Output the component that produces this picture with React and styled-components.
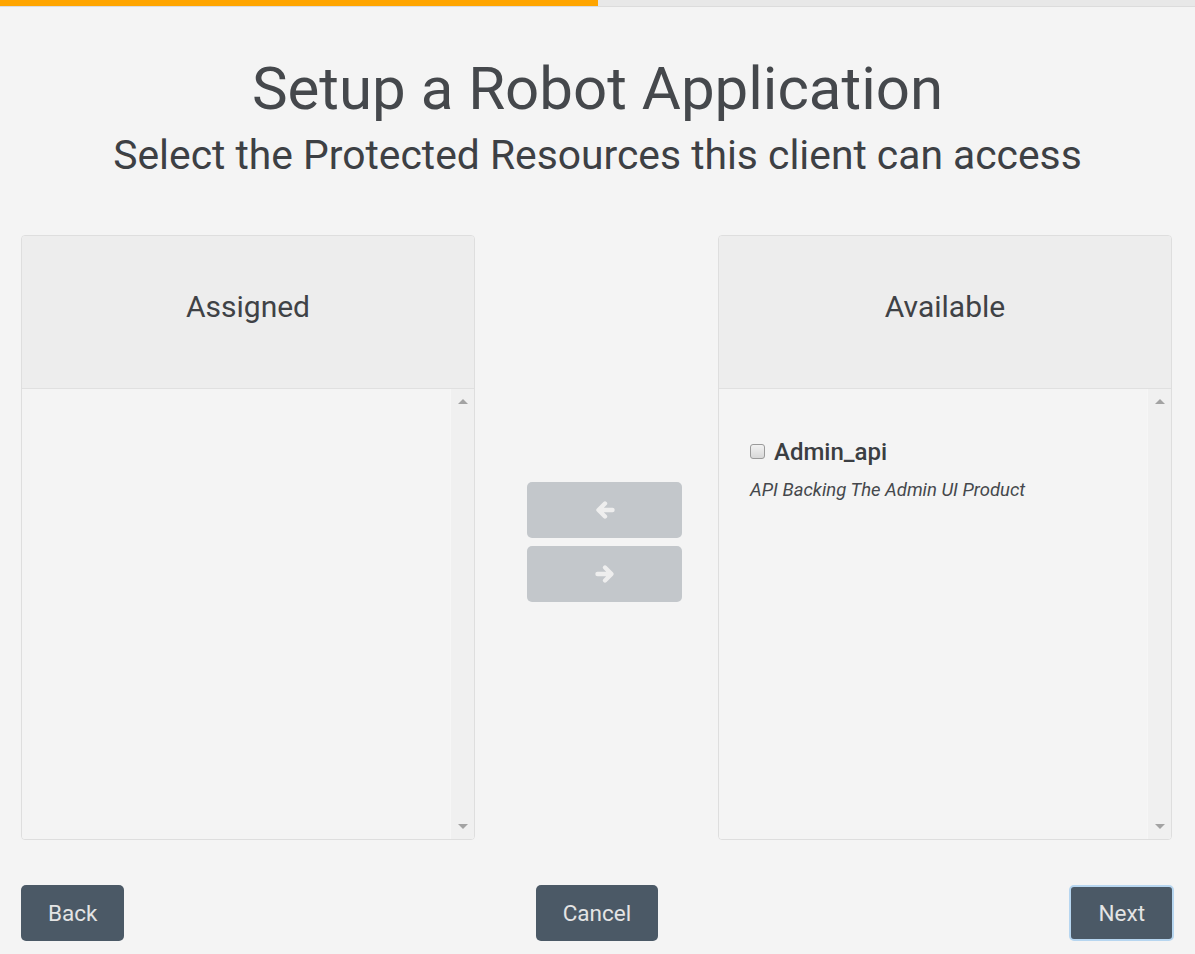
import React from 'react'
import styled, { createGlobalStyle } from 'styled-components'

const GlobalStyle = createGlobalStyle`
  html, body {
    margin: 0;
    padding: 0;
    background: #f4f4f4;
    font-family: Roboto, 'Liberation Sans', sans-serif;
  }
`

const Page = styled.div`
  width: 1195px;
  min-height: 954px;
  background: #f4f4f4;
  display: flex;
  flex-direction: column;
`

const Progress = styled.div`
  height: 6px;
  background: #e8e8e8;
  border-bottom: 1px solid #dcdcdc;
  display: flex;
`

const ProgressFill = styled.div`
  background: #ffa500;
  height: 100%;
`

const Heading = styled.header`
  display: flex;
  flex-direction: column;
  align-items: center;
  color: #45484c;
  padding-top: 48px;
`

const Title = styled.h1`
  margin: 0;
  font-size: 60px;
  font-weight: 400;
  line-height: 68px;
`

const Subtitle = styled.h2`
  margin: 8px 0 0;
  font-size: 40.8px;
  font-weight: 400;
  line-height: 48px;
  color: #3d4044;
`

const Picker = styled.section`
  display: grid;
  grid-template-columns: 454px 1fr 454px;
  padding: 0 23px 0 21px;
  margin-top: 56px;
`

const Panel = styled.div`
  height: 605px;
  border: 1px solid #dedede;
  border-radius: 4px;
  display: flex;
  flex-direction: column;
  overflow: hidden;
  box-sizing: border-box;
`

const PanelHead = styled.div`
  height: 153px;
  flex: none;
  background: #ededed;
  border-bottom: 1px solid #e0e0e0;
  display: flex;
  align-items: center;
  justify-content: center;
  padding-bottom: 12px;
  box-sizing: border-box;
  font-size: 30px;
  color: #3f4246;
`

const PanelBody = styled.div`
  flex: 1;
  display: flex;
  background: #f4f4f4;
`

const List = styled.div`
  flex: 1;
  padding: 49px 0 0 31px;
`

const Scrollbar = styled.div`
  width: 23px;
  flex: none;
  background: #f0f0f0;
  border-left: 1px solid #f6f6f6;
  display: flex;
  flex-direction: column;
  justify-content: space-between;
  align-items: center;
  padding: 10px 0 10px;
`

const Tri = styled.span`
  width: 0;
  height: 0;
  border-left: 5px solid transparent;
  border-right: 5px solid transparent;
  ${(p) =>
    p.$down
      ? 'border-top: 5px solid #a3a3a3;'
      : 'border-bottom: 5px solid #a3a3a3;'}
`

const Item = styled.label`
  display: flex;
  align-items: center;
  gap: 9px;
  font-size: 24px;
  font-weight: 500;
  color: #3b3e42;
`

const Box = styled.span`
  width: 13px;
  height: 13px;
  border: 1px solid #9a9a9a;
  border-radius: 3px;
  background: linear-gradient(#f2f2f2, #d8d8d8);
  display: inline-block;
  margin-top: -2px;
`

const Desc = styled.div`
  margin-top: 13px;
  font-size: 18.5px;
  font-style: italic;
  color: #45484c;
`

const Middle = styled.div`
  display: flex;
  flex-direction: column;
  align-items: center;
  padding: 247px 0 0 16px;
  gap: 8px;
`

const MoveButton = styled.button`
  width: 155px;
  height: 56px;
  border: none;
  border-radius: 5px;
  background: #c3c7cb;
  display: flex;
  align-items: center;
  justify-content: center;
  padding: 0;
`

const Footer = styled.footer`
  display: flex;
  justify-content: space-between;
  align-items: center;
  padding: 45px 21px 0 21px;
`

const ActionButton = styled.button`
  height: 56px;
  padding: 0 27px;
  border-radius: 5px;
  border: ${(p) => (p.$focus ? '2px solid #b7d6f0' : 'none')};
  background: #4b5966;
  color: #e4e4e4;
  font-family: Roboto, 'Liberation Sans', sans-serif;
  font-size: 22.5px;
  box-sizing: border-box;
`

const Arrow = ({ dir }) => (
  <svg width="22" height="20" viewBox="0 0 22 20">
    {dir === 'left' ? (
      <path
        d="M18.5 10H5M11 3.5L4.5 10l6.5 6.5"
        fill="none"
        stroke="#eeeeee"
        strokeWidth="4.4"
        strokeLinecap="round"
        strokeLinejoin="round"
      />
    ) : (
      <path
        d="M3.5 10H17M11 3.5l6.5 6.5-6.5 6.5"
        fill="none"
        stroke="#eeeeee"
        strokeWidth="4.4"
        strokeLinecap="round"
        strokeLinejoin="round"
      />
    )}
  </svg>
)

const ResourcePanel = ({ title, children }) => (
  <Panel>
    <PanelHead>{title}</PanelHead>
    <PanelBody>
      <List>{children}</List>
      <Scrollbar>
        <Tri />
        <Tri $down />
      </Scrollbar>
    </PanelBody>
  </Panel>
)

export default function App() {
  return (
    <Page>
      <GlobalStyle />
      <Progress>
        <ProgressFill style={{ width: '50%' }} />
      </Progress>
      <Heading>
        <Title>Setup a Robot Application</Title>
        <Subtitle>Select the Protected Resources this client can access</Subtitle>
      </Heading>
      <Picker>
        <ResourcePanel title="Assigned" />
        <Middle>
          <MoveButton>
            <Arrow dir="left" />
          </MoveButton>
          <MoveButton>
            <Arrow dir="right" />
          </MoveButton>
        </Middle>
        <ResourcePanel title="Available">
          <Item>
            <Box />
            Admin_api
          </Item>
          <Desc>API Backing The Admin UI Product</Desc>
        </ResourcePanel>
      </Picker>
      <Footer>
        <ActionButton>Back</ActionButton>
        <ActionButton>Cancel</ActionButton>
        <ActionButton $focus>Next</ActionButton>
      </Footer>
    </Page>
  )
}
